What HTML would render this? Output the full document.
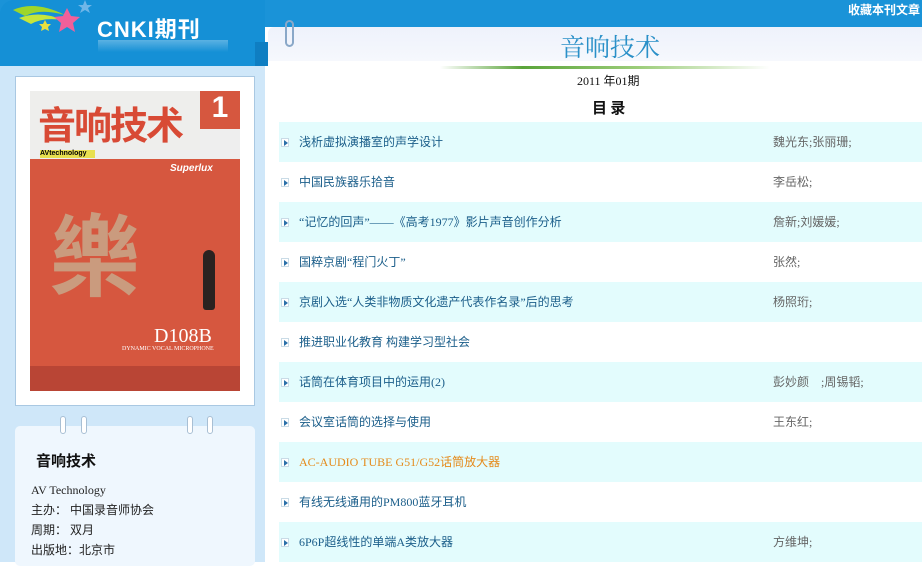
<!DOCTYPE html>
<html><head><meta charset="utf-8"><style>
*{margin:0;padding:0;box-sizing:border-box}
body{width:922px;height:562px;overflow:hidden;background:#fff;font-family:"Liberation Serif","Noto Sans CJK SC",serif;position:relative}
.abs{position:absolute}
.top{left:0;top:0;width:922px;height:27px;background:#1a93d8}
.lefthead{left:0;top:0;width:265px;height:66px;background:#1590d6;border-radius:14px 0 0 0}
.leftcol{left:0;top:66px;width:265px;height:496px;background:#cfe7f9}
.strip{left:255px;top:42px;width:14px;height:24px;background:#0f7ec2}
.panel{left:268px;top:27px;width:654px;height:535px;background:#fff;border-radius:6px 0 0 0}
.phead{left:268px;top:27px;width:654px;height:34px;background:linear-gradient(#eef2fb,#f6f8fd);border-radius:6px 0 0 0}
.row{left:279px;width:643px;height:40px;font-family:"Liberation Serif","Noto Sans CJK SC",sans-serif;font-size:12px;color:#1b5e8a;line-height:40px}
.row.c{background:#e3fcfd}
.row .t{position:absolute;left:20px}
.row .a{position:absolute;left:494px;color:#666}
.row .ic{position:absolute;left:2px;top:16px;width:8px;height:9px;border:1px solid #c9dbe6;background:#fff}
.row .ic:after{content:"";position:absolute;left:2px;top:1px;border-left:4px solid #2a6fa8;border-top:3px solid transparent;border-bottom:3px solid transparent}
</style></head><body>
<div class="abs top"></div>
<div class="abs lefthead"></div>
<div class="abs leftcol"></div>
<div class="abs strip"></div>
<div class="abs panel"></div>
<div class="abs phead"></div>
<svg class="abs" style="left:5px;top:0" width="90" height="45" viewBox="0 0 90 45">
<path d="M8 10 Q30 0 60 15 Q35 8 20 16Z" fill="#9ed62a"/>
<path d="M14 18 Q35 10 58 20 Q38 17 26 24Z" fill="#c6e63a"/>
<polygon points="62,8 66,16 75,17 68,23 70,32 62,27 54,32 56,23 49,17 58,16" fill="#f2609a"/>
<polygon points="80,0 82,5 87,5 83,8 85,13 80,10 75,13 77,8 73,5 78,5" fill="#6fb6e8"/>
<polygon points="40,20 42,24 46,24 43,27 44,31 40,29 36,31 37,27 34,24 38,24" fill="#e8e040"/>
</svg>
<div class="abs" style="left:97px;top:12px;color:#fff;font:bold 22px 'Liberation Sans','Noto Sans CJK SC',sans-serif;letter-spacing:1px">CNKI<span style="font-size:22px">期刊</span></div>
<div class="abs" style="left:98px;top:40px;width:130px;height:12px;background:linear-gradient(rgba(255,255,255,.3),rgba(255,255,255,0))"></div>
<div class="abs" style="right:2px;top:1px;color:#fff;font:bold 12px 'Liberation Sans','Noto Sans CJK SC',sans-serif">收藏本刊文章</div>
<div class="abs" style="left:285px;top:20px;width:9px;height:27px;border:2px solid #8aa8c8;border-radius:5px"></div>
<div class="abs" style="left:15px;top:76px;width:240px;height:330px;background:#fff;border:1px solid #a9c8e2"></div>
<div class="abs" style="left:30px;top:91px;width:210px;height:300px;background:#d6573f"></div>
<div class="abs" style="left:30px;top:91px;width:170px;height:60px;background:#eeeeec"></div>
<div class="abs" style="left:200px;top:91px;width:40px;height:38px;background:#d6573f;color:#fff;font:bold 30px 'Liberation Sans';text-align:center">1</div>
<div class="abs" style="left:200px;top:129px;width:40px;height:30px;background:#eee"></div>
<div class="abs" style="left:38px;top:100px;color:#d84a35;font:bold 38px 'Noto Sans CJK SC',sans-serif;line-height:46px;letter-spacing:-2px">音响技术</div>
<div class="abs" style="left:30px;top:150px;width:170px;height:9px;background:#eee"></div>
<div class="abs" style="left:40px;top:150px;width:55px;height:8px;background:#e8e050;font:bold 7px 'Liberation Sans';line-height:8px">AVtechnology</div>
<div class="abs" style="left:170px;top:163px;color:#fff;font:italic bold 10px 'Liberation Sans'">Superlux</div>
<div class="abs" style="left:50px;top:200px;color:#c9a88a;font:bold 90px 'Noto Sans CJK TC',sans-serif;line-height:100px;opacity:.85">樂</div>
<div class="abs" style="left:203px;top:250px;width:12px;height:60px;background:#2a2220;border-radius:6px 6px 3px 3px"></div>
<div class="abs" style="left:154px;top:325px;color:#fff;font:20px 'Liberation Serif'">D108B</div>
<div class="abs" style="left:122px;top:346px;color:#fff;font:6px 'Liberation Serif';white-space:nowrap">DYNAMIC VOCAL MICROPHONE</div>
<div class="abs" style="left:30px;top:366px;width:210px;height:25px;background:#b94535"></div>
<div class="abs" style="left:15px;top:426px;width:240px;height:140px;background:#eff7fe;border-radius:5px"></div>
<div class="abs" style="left:60px;top:416px;width:6px;height:18px;border:1px solid #a8bfd4;border-radius:3px;background:#fff"></div>
<div class="abs" style="left:81px;top:416px;width:6px;height:18px;border:1px solid #a8bfd4;border-radius:3px;background:#fff"></div>
<div class="abs" style="left:187px;top:416px;width:6px;height:18px;border:1px solid #a8bfd4;border-radius:3px;background:#fff"></div>
<div class="abs" style="left:207px;top:416px;width:6px;height:18px;border:1px solid #a8bfd4;border-radius:3px;background:#fff"></div>
<div class="abs" style="left:36px;top:450px;font:bold 15px 'Liberation Sans','Noto Sans CJK SC',sans-serif;color:#111">音响技术</div>
<div class="abs" style="left:31px;top:480px;font:12px/20px 'Liberation Serif','Noto Sans CJK SC',serif;color:#222">AV Technology<br>主办： 中国录音师协会<br>周期： 双月<br>出版地：北京市</div>
<div class="abs" style="left:560px;top:28px;color:#2a90c8;font:25px 'Noto Serif CJK SC','Noto Sans CJK SC',serif">音响技术</div>
<div class="abs" style="left:440px;top:66px;width:330px;height:3px;background:linear-gradient(90deg,rgba(110,180,60,0),#5aa43a 25%,#9ccd7a 60%,rgba(200,230,190,0))"></div>
<div class="abs" style="left:577px;top:72px;font:12px 'Liberation Serif','Noto Sans CJK SC',serif;color:#111">2011 年01期</div>
<div class="abs" style="left:592px;top:97px;font:bold 15px 'Noto Sans CJK SC',sans-serif;color:#111">目 录</div>
<div class="abs row c" style="top:122px"><i class="ic"></i><span class="t">浅析虚拟演播室的声学设计</span><span class="a">魏光东;张丽珊;</span></div>
<div class="abs row" style="top:162px"><i class="ic"></i><span class="t">中国民族器乐拾音</span><span class="a">李岳松;</span></div>
<div class="abs row c" style="top:202px"><i class="ic"></i><span class="t">“记忆的回声”——《高考1977》影片声音创作分析</span><span class="a">詹新;刘媛媛;</span></div>
<div class="abs row" style="top:242px"><i class="ic"></i><span class="t">国粹京剧“程门火丁”</span><span class="a">张然;</span></div>
<div class="abs row c" style="top:282px"><i class="ic"></i><span class="t">京剧入选“人类非物质文化遗产代表作名录”后的思考</span><span class="a">杨照珩;</span></div>
<div class="abs row" style="top:322px"><i class="ic"></i><span class="t">推进职业化教育 构建学习型社会</span></div>
<div class="abs row c" style="top:362px"><i class="ic"></i><span class="t">话筒在体育项目中的运用(2)</span><span class="a">彭妙颜　;周锡韬;</span></div>
<div class="abs row" style="top:402px"><i class="ic"></i><span class="t">会议室话筒的选择与使用</span><span class="a">王东红;</span></div>
<div class="abs row c" style="top:442px"><i class="ic"></i><span class="t" style="color:#e58a1a">AC-AUDIO TUBE G51/G52话筒放大器</span></div>
<div class="abs row" style="top:482px"><i class="ic"></i><span class="t">有线无线通用的PM800蓝牙耳机</span></div>
<div class="abs row c" style="top:522px"><i class="ic"></i><span class="t">6P6P超线性的单端A类放大器</span><span class="a">方维坤;</span></div>
</body></html>
